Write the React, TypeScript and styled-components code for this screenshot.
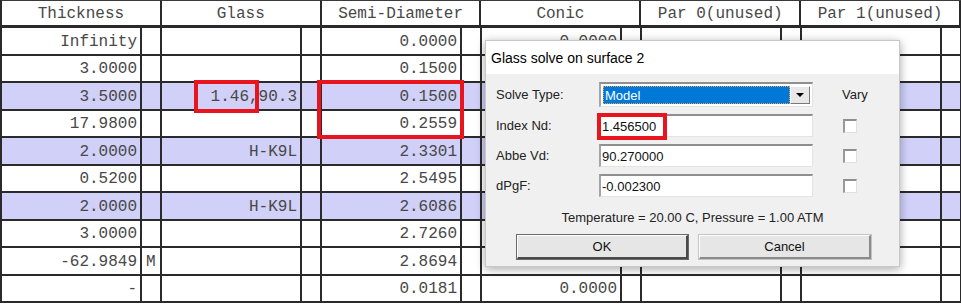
import React from 'react';
import styled, { createGlobalStyle } from 'styled-components';

interface SurfaceRow {
  thickness: string;
  flag?: string;
  glass?: string;
  semiDiameter: string;
  conic: string;
  highlight?: boolean;
}

const rows: SurfaceRow[] = [
  { thickness: 'Infinity', semiDiameter: '0.0000', conic: '0.0000' },
  { thickness: '3.0000', semiDiameter: '0.1500', conic: '0.0000' },
  { thickness: '3.5000', glass: '1.46,90.3', semiDiameter: '0.1500', conic: '0.0000', highlight: true },
  { thickness: '17.9800', semiDiameter: '0.2559', conic: '0.0000' },
  { thickness: '2.0000', glass: 'H-K9L', semiDiameter: '2.3301', conic: '0.0000', highlight: true },
  { thickness: '0.5200', semiDiameter: '2.5495', conic: '0.0000' },
  { thickness: '2.0000', glass: 'H-K9L', semiDiameter: '2.6086', conic: '0.0000', highlight: true },
  { thickness: '3.0000', semiDiameter: '2.7260', conic: '0.0000' },
  { thickness: '-62.9849', flag: 'M', semiDiameter: '2.8694', conic: '0.0000' },
  { thickness: '-', semiDiameter: '0.0181', conic: '0.0000' },
];

const headers = ['Thickness', 'Glass', 'Semi-Diameter', 'Conic', 'Par 0(unused)', 'Par 1(unused)'];

const GlobalStyle = createGlobalStyle`
  body {
    margin: 0;
    background: #ffffff;
  }
`;

const Page = styled.div`
  position: relative;
  width: 961px;
  height: 304px;
  overflow: hidden;
  background: #ffffff;
`;

const Grid = styled.div`
  display: flex;
  flex-direction: column;
  width: 961px;
  font-family: 'Liberation Mono', 'Courier New', monospace;
  font-size: 16px;
  color: #484848;
`;

const HeaderRow = styled.div`
  display: flex;
  height: 28px;
  box-sizing: border-box;
  border-top: 1px solid #3a3a3a;
  border-bottom: 3px solid #2a2a2a;
  border-left: 2px solid #2a2a2a;
`;

const HeaderCell = styled.div`
  width: 160px;
  box-sizing: border-box;
  border-right: 2px solid #2a2a2a;
  display: flex;
  align-items: center;
  justify-content: center;
  white-space: pre;
  padding-top: 2px;
`;

const Row = styled.div<{ $highlight?: boolean }>`
  display: flex;
  height: 27.5px;
  box-sizing: border-box;
  border-bottom: 2px solid #2a2a2a;
  border-left: 2px solid #2a2a2a;
  background: ${(p) => (p.$highlight ? '#d0d0f8' : '#ffffff')};
`;

const Group = styled.div`
  display: flex;
  width: 160px;
`;

const ValueCell = styled.div`
  width: 140px;
  box-sizing: border-box;
  border-right: 2px solid #2a2a2a;
  display: flex;
  align-items: center;
  justify-content: flex-end;
  padding: 2px 3px 0 0;
  white-space: pre;
`;

const FlagCell = styled.div`
  width: 20px;
  box-sizing: border-box;
  border-right: 2px solid #2a2a2a;
  display: flex;
  align-items: center;
  padding: 2px 0 0 4px;
`;

const Dialog = styled.div`
  position: absolute;
  left: 485px;
  top: 40px;
  width: 413px;
  height: 225px;
  display: flex;
  flex-direction: column;
  background: #f0f0f0;
  border: 1px solid #c8c8c8;
  box-shadow: 0 2px 9px rgba(0, 0, 0, 0.35);
  font-family: 'Liberation Sans', Arial, sans-serif;
  font-size: 13px;
  color: #1a1a1a;
  z-index: 2;
`;

const TitleBar = styled.div`
  height: 33px;
  background: #ffffff;
  display: flex;
  align-items: center;
  padding-left: 5px;
  font-size: 14px;
  color: #000000;
`;

const Body = styled.div`
  display: flex;
  flex-direction: column;
  padding: 8px 0 0 10px;
`;

const Form = styled.div`
  display: grid;
  grid-template-columns: 103px 214px 70px;
  grid-template-rows: 25px 23px 23px 23px;
  row-gap: 7px;
  align-items: center;
`;

const Label = styled.div`
  color: #222222;
`;

const Field = styled.div`
  height: 100%;
  box-sizing: border-box;
  background: #ffffff;
  border-top: 2px solid #8f8f8f;
  border-left: 2px solid #a5a5a5;
  border-right: 1px solid #e3e3e3;
  border-bottom: 1px solid #e3e3e3;
  display: flex;
  align-items: center;
  padding-left: 1px;
  color: #111111;
`;

const Select = styled(Field)`
  padding: 2px;
`;

const SelectValue = styled.div`
  flex: 1;
  height: 100%;
  box-sizing: border-box;
  background: #0078d7;
  color: #ffffff;
  border: 1px dotted #e8a050;
  display: flex;
  align-items: center;
  padding-left: 1px;
`;

const DropButton = styled.div`
  width: 20px;
  height: 100%;
  box-sizing: border-box;
  background: #e8e8e8;
  border-top: 1px solid #ffffff;
  border-left: 1px solid #ffffff;
  border-right: 1px solid #7a7a7a;
  border-bottom: 1px solid #7a7a7a;
  display: flex;
  align-items: center;
  justify-content: center;
`;

const Arrow = styled.div`
  width: 0;
  height: 0;
  border-left: 4px solid transparent;
  border-right: 4px solid transparent;
  border-top: 4px solid #000000;
`;

const VaryLabel = styled.div`
  color: #222222;
  margin-left: 29px;
`;

const CheckBox = styled.div`
  width: 14px;
  height: 14px;
  box-sizing: border-box;
  background: #ffffff;
  border-top: 2px solid #8f8f8f;
  border-left: 2px solid #9a9a9a;
  border-right: 1px solid #e0e0e0;
  border-bottom: 1px solid #e0e0e0;
  margin-left: 30px;
`;

const Note = styled.div`
  text-align: center;
  margin-top: 13px;
  margin-left: -10px;
  color: #222222;
`;

const Buttons = styled.div`
  display: flex;
  gap: 11px;
  margin-top: 10px;
  margin-left: 21px;
`;

const Button = styled.div<{ $default?: boolean }>`
  width: ${(p) => (p.$default ? '171px' : '172px')};
  height: 24px;
  box-sizing: border-box;
  background: #e6e6e6;
  border-top: 1px solid #ffffff;
  border-left: 1px solid #ffffff;
  border-right: 2px solid ${(p) => (p.$default ? '#4a4a4a' : '#8a8a8a')};
  border-bottom: 2px solid ${(p) => (p.$default ? '#4a4a4a' : '#8a8a8a')};
  outline: 1px solid ${(p) => (p.$default ? '#6a6a6a' : '#c4c4c4')};
  display: flex;
  align-items: center;
  justify-content: center;
  color: #111111;
`;

const Mark = styled.div<{ $x: number; $y: number; $w: number; $h: number }>`
  position: absolute;
  left: ${(p) => p.$x}px;
  top: ${(p) => p.$y}px;
  width: ${(p) => p.$w}px;
  height: ${(p) => p.$h}px;
  box-sizing: border-box;
  border: 4px solid #e8141e;
  z-index: 3;
`;

const App = () => {
  return (
    <Page>
      <GlobalStyle />
      <Grid>
        <HeaderRow>
          {headers.map((h) => (
            <HeaderCell key={h}>{h}</HeaderCell>
          ))}
        </HeaderRow>
        {rows.map((r, i) => (
          <Row key={i} $highlight={r.highlight}>
            <Group>
              <ValueCell>{r.thickness}</ValueCell>
              <FlagCell>{r.flag}</FlagCell>
            </Group>
            <Group>
              <ValueCell>{r.glass}</ValueCell>
              <FlagCell />
            </Group>
            <Group>
              <ValueCell>{r.semiDiameter}</ValueCell>
              <FlagCell />
            </Group>
            <Group>
              <ValueCell>{r.conic}</ValueCell>
              <FlagCell />
            </Group>
            <Group>
              <ValueCell />
              <FlagCell />
            </Group>
            <Group>
              <ValueCell />
              <FlagCell />
            </Group>
          </Row>
        ))}
      </Grid>

      <Dialog>
        <TitleBar>Glass solve on surface 2</TitleBar>
        <Body>
          <Form>
            <Label>Solve Type:</Label>
            <Select>
              <SelectValue>Model</SelectValue>
              <DropButton>
                <Arrow />
              </DropButton>
            </Select>
            <VaryLabel>Vary</VaryLabel>

            <Label>Index Nd:</Label>
            <Field>1.456500</Field>
            <CheckBox />

            <Label>Abbe Vd:</Label>
            <Field>90.270000</Field>
            <CheckBox />

            <Label>dPgF:</Label>
            <Field>-0.002300</Field>
            <CheckBox />
          </Form>
          <Note>Temperature = 20.00 C, Pressure = 1.00 ATM</Note>
          <Buttons>
            <Button $default>OK</Button>
            <Button>Cancel</Button>
          </Buttons>
        </Body>
      </Dialog>

      <Mark $x={194} $y={80} $w={65} $h={33} />
      <Mark $x={317} $y={80} $w={147} $h={59} />
      <Mark $x={597} $y={113} $w={70} $h={27} />
    </Page>
  );
};

export default App;
